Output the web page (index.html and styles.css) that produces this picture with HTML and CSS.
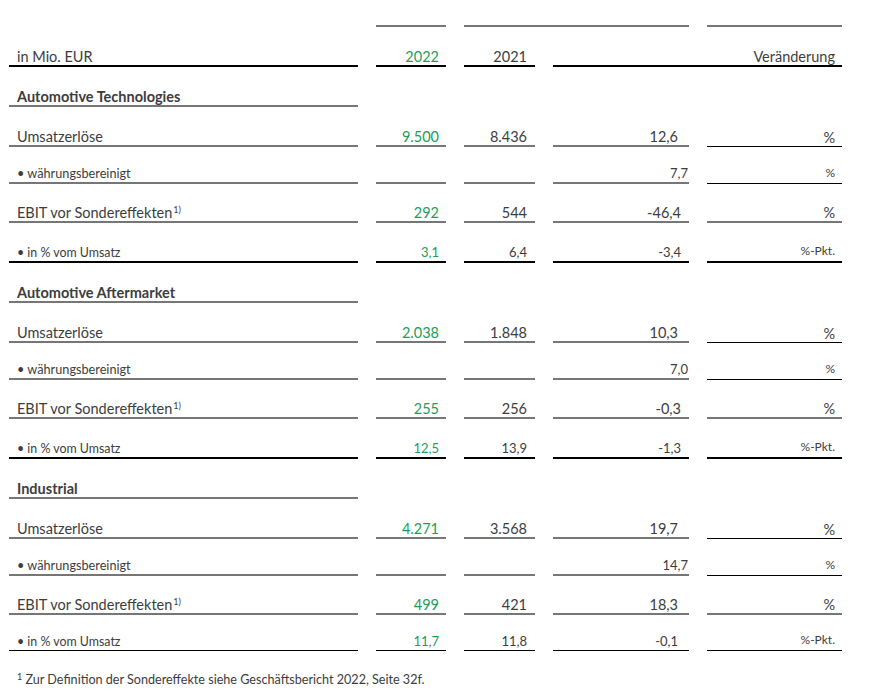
FILE: index.html
```html
<!DOCTYPE html>
<html lang="de">
<head>
<meta charset="utf-8">
<title>Segmente</title>
<link rel="stylesheet" href="styles.css">
</head>
<body>
<div class="table">
  <div class="row cap">
    <div class="cell"></div>
    <div class="cell bl-g"></div>
    <div class="cell span2 bl-g"></div>
    <div class="cell bl-g"></div>
  </div>
  <div class="row head">
    <div class="cell lab bl-k">in Mio. EUR</div>
    <div class="cell num y22 bl-k">2022</div>
    <div class="cell num y21 bl-k">2021</div>
    <div class="cell num span2 unit bl-k">Veränderung</div>
  </div>

  <div class="row sec">
    <div class="cell lab bold bl-g">Automotive Technologies</div>
    <div class="cell"></div><div class="cell"></div><div class="cell"></div><div class="cell"></div>
  </div>
  <div class="row main">
    <div class="cell lab bl-g">Umsatzerlöse</div>
    <div class="cell num y22 bl-g">9.500</div>
    <div class="cell num y21 bl-g">8.436</div>
    <div class="cell num chg bl-g">12,6</div>
    <div class="cell num unit bl-k1">%</div>
  </div>
  <div class="row fx small">
    <div class="cell lab bl-g">• währungsbereinigt</div>
    <div class="cell num y22 bl-g"></div>
    <div class="cell num y21 bl-g"></div>
    <div class="cell num chg tight bl-g">7,7</div>
    <div class="cell num unit bl-k1">%</div>
  </div>
  <div class="row ebit">
    <div class="cell lab bl-g"><span>EBIT vor Sondereffekten<sup>1)</sup></span></div>
    <div class="cell num y22 bl-g">292</div>
    <div class="cell num y21 bl-g">544</div>
    <div class="cell num chg neg bl-g">-46,4</div>
    <div class="cell num unit bl-g">%</div>
  </div>
  <div class="row pct small">
    <div class="cell lab bl-k">• in % vom Umsatz</div>
    <div class="cell num y22 bl-k">3,1</div>
    <div class="cell num y21 bl-k">6,4</div>
    <div class="cell num chg neg bl-k">-3,4</div>
    <div class="cell num unit bl-k">%-Pkt.</div>
  </div>

  <div class="row sec">
    <div class="cell lab bold bl-g">Automotive Aftermarket</div>
    <div class="cell"></div><div class="cell"></div><div class="cell"></div><div class="cell"></div>
  </div>
  <div class="row main">
    <div class="cell lab bl-g">Umsatzerlöse</div>
    <div class="cell num y22 bl-g">2.038</div>
    <div class="cell num y21 bl-g">1.848</div>
    <div class="cell num chg bl-g">10,3</div>
    <div class="cell num unit bl-k1">%</div>
  </div>
  <div class="row fx small">
    <div class="cell lab bl-g">• währungsbereinigt</div>
    <div class="cell num y22 bl-g"></div>
    <div class="cell num y21 bl-g"></div>
    <div class="cell num chg tight bl-g">7,0</div>
    <div class="cell num unit bl-k1">%</div>
  </div>
  <div class="row ebit">
    <div class="cell lab bl-g"><span>EBIT vor Sondereffekten<sup>1)</sup></span></div>
    <div class="cell num y22 bl-g">255</div>
    <div class="cell num y21 bl-g">256</div>
    <div class="cell num chg neg bl-g">-0,3</div>
    <div class="cell num unit bl-g">%</div>
  </div>
  <div class="row pct small">
    <div class="cell lab bl-k">• in % vom Umsatz</div>
    <div class="cell num y22 bl-k">12,5</div>
    <div class="cell num y21 bl-k">13,9</div>
    <div class="cell num chg neg bl-k">-1,3</div>
    <div class="cell num unit bl-k">%-Pkt.</div>
  </div>

  <div class="row sec">
    <div class="cell lab bold bl-g">Industrial</div>
    <div class="cell"></div><div class="cell"></div><div class="cell"></div><div class="cell"></div>
  </div>
  <div class="row main">
    <div class="cell lab bl-g">Umsatzerlöse</div>
    <div class="cell num y22 bl-g">4.271</div>
    <div class="cell num y21 bl-g">3.568</div>
    <div class="cell num chg bl-g">19,7</div>
    <div class="cell num unit bl-k1">%</div>
  </div>
  <div class="row fx small">
    <div class="cell lab bl-g">• währungsbereinigt</div>
    <div class="cell num y22 bl-g"></div>
    <div class="cell num y21 bl-g"></div>
    <div class="cell num chg tight bl-g">14,7</div>
    <div class="cell num unit bl-k1">%</div>
  </div>
  <div class="row ebit">
    <div class="cell lab bl-g"><span>EBIT vor Sondereffekten<sup>1)</sup></span></div>
    <div class="cell num y22 bl-g">499</div>
    <div class="cell num y21 bl-g">421</div>
    <div class="cell num chg bl-g">18,3</div>
    <div class="cell num unit bl-g">%</div>
  </div>
  <div class="row pct small last">
    <div class="cell lab bl-k1">• in % vom Umsatz</div>
    <div class="cell num y22 bl-k1">11,7</div>
    <div class="cell num y21 bl-k1">11,8</div>
    <div class="cell num chg bl-k1">-0,1</div>
    <div class="cell num unit bl-k1">%-Pkt.</div>
  </div>
</div>
<p class="note"><span class="fn">1</span> Zur Definition der Sondereffekte siehe Geschäftsbericht 2022, Seite 32f.</p>
</body>
</html>
```

FILE: styles.css
```css
html, body {
  margin: 0;
  padding: 0;
  background: #ffffff;
}
body {
  padding-left: 9px;
  font-family: Lato, "Open Sans", sans-serif;
  color: #3d3d3d;
  font-size: 14.5px;
}
.table {
  width: 833px;
}
.row {
  display: grid;
  grid-template-columns: 349px 70px 71px 136px 135px;
  column-gap: 18px;
  box-sizing: border-box;
}
.cell {
  box-sizing: border-box;
  display: flex;
  align-items: flex-end;
  padding-bottom: 0;
  line-height: 17px;
  white-space: nowrap;
}
.span2 { grid-column: span 2; }
.lab { padding-left: 8px; }
.bold { font-weight: 700; }
.num { justify-content: flex-end; }
.y22 { color: #1e9d57; padding-right: 7px; }
.y21 { padding-right: 8px; }
.chg { padding-right: 11px; }
.chg.neg { padding-right: 8px; }
.chg.tight { padding-right: 1px; }
.unit { padding-right: 7px; }

.bl-g { border-bottom: 2px solid #767676; }
.bl-k { border-bottom: 2px solid #000000; }
.bl-k1 { border-bottom: 1px solid #000000; }

.cap { height: 27px; }
.head { height: 40px; }
.sec { height: 40px; }
.main { height: 40px; }
.fx { height: 37px; }
.ebit { height: 39px; }
.pct { height: 40px; }
.pct.last { height: 36px; }

.small .lab { font-size: 12.7px; }
.small .num { font-size: 13px; }
.small .unit { font-size: 12px; padding-bottom: 2px; }
.pct .lab { font-size: 12.4px; }

sup {
  font-size: 9px;
  line-height: 0;
  vertical-align: 5px;
  margin-left: 1px;
}
.note {
  margin: 17px 0 0 8px;
  font-size: 12.6px;
  line-height: 18px;
}
.fn {
  font-size: 9px;
  vertical-align: 4px;
}
```
